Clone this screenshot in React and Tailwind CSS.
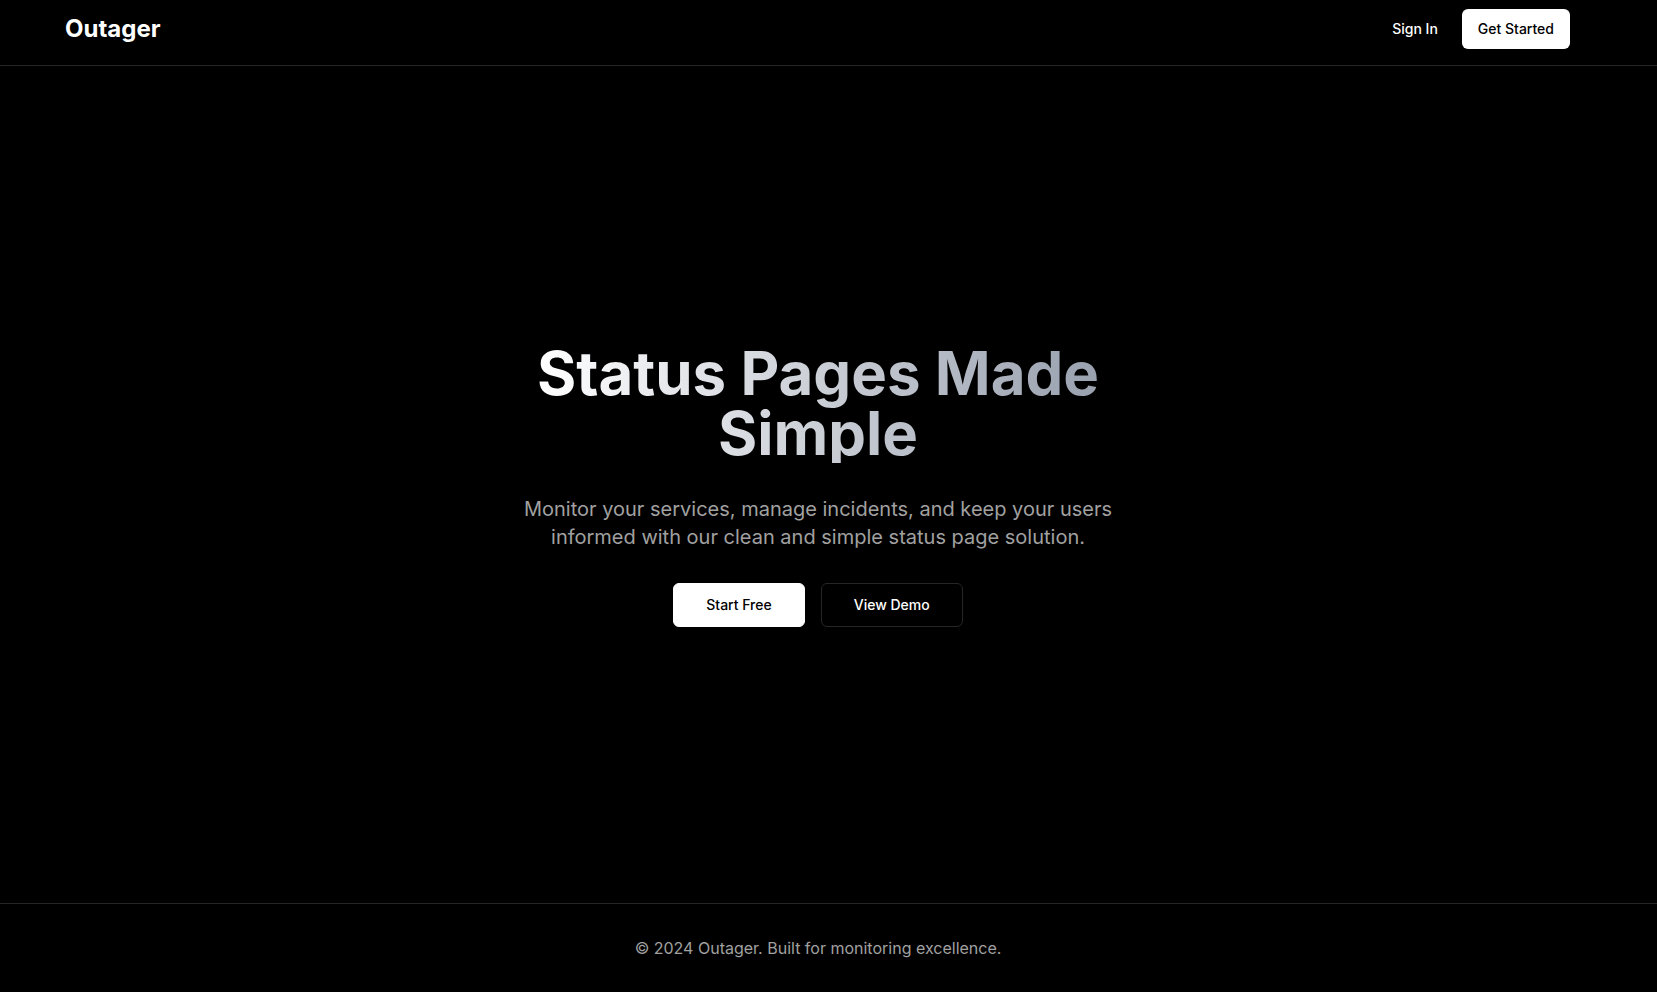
export default function App() {
  return (
    <div
      className="min-h-screen flex flex-col bg-black text-white"
      style={{ fontFamily: "Inter, 'Noto Sans', sans-serif" }}
    >
      <header className="border-b border-[#262626]">
        <div className="pt-[9px] pb-4 flex items-center justify-between pl-[65px] pr-[87px]">
          <div className="text-2xl font-bold">Outager</div>
          <nav className="flex items-center gap-2">
            <button className="h-10 px-4 rounded-md text-sm font-medium text-white">
              Sign In
            </button>
            <button className="h-10 px-4 rounded-md text-sm font-medium bg-white text-black">
              Get Started
            </button>
          </nav>
        </div>
      </header>

      <main className="flex-1 flex items-center justify-center pr-[21px]">
        <div className="flex flex-col items-center text-center">
          <h1 className="text-6xl leading-none font-bold mb-8 bg-gradient-to-r from-white to-gray-400 bg-clip-text text-transparent">
            Status Pages Made
            <br />
            Simple
          </h1>
          <p className="max-w-2xl text-xl text-[#a1a1a1] mb-8">
            Monitor your services, manage incidents, and keep your users informed with our clean and simple status page solution.
          </p>
          <div className="flex items-center gap-4">
            <button className="px-8 py-[11px] rounded-md border border-white bg-white text-black text-sm font-medium">
              Start Free
            </button>
            <button className="px-8 py-[11px] rounded-md border border-[#262626] bg-black text-white text-sm font-medium">
              View Demo
            </button>
          </div>
        </div>
      </main>

      <footer className="border-t border-[#262626]">
        <div className="py-8 pr-[21px] text-center text-base text-[#a1a1a1]">
          © 2024 Outager. Built for monitoring excellence.
        </div>
      </footer>
    </div>
  );
}
